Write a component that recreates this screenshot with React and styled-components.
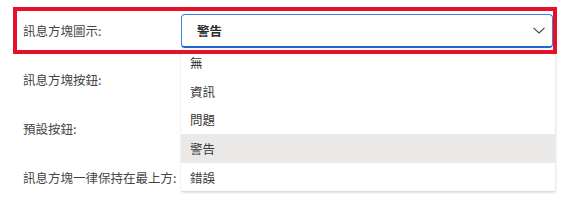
import React from "react";
import styled, { createGlobalStyle } from "styled-components";

const GlobalStyle = createGlobalStyle`
  html, body {
    margin: 0;
    padding: 0;
    background: #ffffff;
  }
  body {
    font-family: "Noto Sans CJK TC", "Noto Sans", sans-serif;
    font-size: 13px;
    color: #333333;
  }
`;

const Form = styled.div`
  width: 536px;
  padding: 11px 0 0 17px;
  display: flex;
  flex-direction: column;
  gap: 10px;
`;

const Row = styled.div`
  position: relative;
  height: 39px;
  display: grid;
  grid-template-columns: 164px 1fr;
  align-items: center;

  ${(p) =>
    p.$marked &&
    `
    &::after {
      content: "";
      position: absolute;
      inset: -4px;
      border: 4px solid #e5112b;
      pointer-events: none;
      z-index: 3;
    }
  `}
`;

const Label = styled.div`
  padding-left: 6px;
  font-size: 12.5px;
  color: #454545;
  white-space: nowrap;
`;

const SelectWrap = styled.div`
  position: relative;
  align-self: center;
`;

const SelectBox = styled.div`
  box-sizing: border-box;
  height: 34px;
  display: flex;
  align-items: center;
  justify-content: space-between;
  padding: 0 7px 0 15px;
  border: 1px solid #3b82e6;
  border-bottom: 2px solid #1a66d2;
  border-radius: 4px;
  background: #fff;
  font-size: 12.5px;
  font-weight: 700;
  color: #2a2a2a;
`;

const Chevron = () => (
  <svg width="12" height="7" viewBox="0 0 12 7" fill="none">
    <path d="M0.5 0.8 L6 6 L11.5 0.8" stroke="#404040" strokeWidth="1.1" />
  </svg>
);

const Menu = styled.ul`
  position: absolute;
  top: 35px;
  left: 0;
  width: 374px;
  margin: 0;
  padding: 0;
  list-style: none;
  background: #fff;
  border-bottom: 1px solid #dcdcdc;
  box-shadow: 0 0 2px rgba(0, 0, 0, 0.12), 1px 1px 3px rgba(0, 0, 0, 0.07);
  z-index: 2;
`;

const Option = styled.li`
  height: 28.6px;
  display: flex;
  align-items: center;
  padding-left: 9px;
  font-size: 12.5px;
  color: #3a3a3a;
  background: ${(p) => (p.$active ? "#ebe9e7" : "transparent")};
`;

const options = ["無", "資訊", "問題", "警告", "錯誤"];

export default function App() {
  return (
    <>
      <GlobalStyle />
      <Form>
        <Row $marked>
          <Label>訊息方塊圖示:</Label>
          <SelectWrap>
            <SelectBox>
              <span>警告</span>
              <Chevron />
            </SelectBox>
            <Menu>
              {options.map((o) => (
                <Option key={o} $active={o === "警告"}>
                  {o}
                </Option>
              ))}
            </Menu>
          </SelectWrap>
        </Row>
        <Row>
          <Label>訊息方塊按鈕:</Label>
        </Row>
        <Row>
          <Label>預設按鈕:</Label>
        </Row>
        <Row>
          <Label>訊息方塊一律保持在最上方:</Label>
        </Row>
      </Form>
    </>
  );
}
